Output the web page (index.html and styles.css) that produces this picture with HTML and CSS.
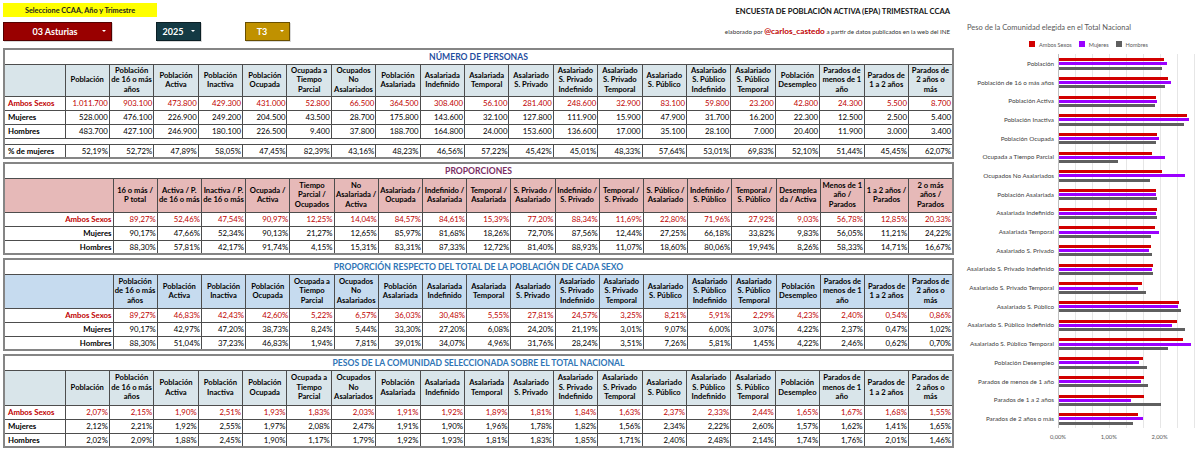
FILE: index.html
```html
<!DOCTYPE html>
<html lang="es">
<head>
<meta charset="utf-8">
<title>EPA trimestral CCAA</title>
<link rel="stylesheet" href="styles.css">
</head>
<body>
<div class="page">
  <main class="main">
    <header class="top">
      <div class="selectors">
        <div class="prompt">Seleccione CCAA, Año y Trimestre</div>
        <div class="dropdowns">
          <div class="dd dd-ccaa"><span class="dd-text">03 Asturias</span><i class="caret"></i></div>
          <div class="dd dd-year"><span class="dd-text">2025</span><i class="caret"></i></div>
          <div class="dd dd-tri"><span class="dd-text">T3</span><i class="caret"></i></div>
        </div>
      </div>
      <div class="heading">
        <div class="h-title">ENCUESTA DE POBLACIÓN ACTIVA (EPA) TRIMESTRAL CCAA</div>
        <div class="h-credit">elaborado por <b class="handle">@carlos_castedo</b> a partir de datos publicados en la web del INE</div>
      </div>
    </header>

    <table class="tbl t-blue">
      <colgroup><col class="c-lab"><col span="20"></colgroup>
      <tr class="ttl ttl-num"><td colspan="21">NÚMERO DE PERSONAS</td></tr>
      <tr class="hdr">
        <th></th><th>Población</th><th>Población<br>de 16 o más<br>años</th><th>Población<br>Activa</th><th>Población<br>Inactiva</th><th>Población<br>Ocupada</th><th>Ocupada a<br>Tiempo<br>Parcial</th><th>Ocupados<br>No<br>Asalariados</th><th>Población<br>Asalariada</th><th>Asalariada<br>Indefinido</th><th>Asalariada<br>Temporal</th><th>Asalariado<br>S. Privado</th><th>Asalariado<br>S. Privado<br>Indefinido</th><th>Asalariado<br>S. Privado<br>Temporal</th><th>Asalariado<br>S. Público</th><th>Asalariado<br>S. Público<br>Indefinido</th><th>Asalariado<br>S. Público<br>Temporal</th><th>Población<br>Desempleo</th><th>Parados de<br>menos de 1<br>año</th><th>Parados de<br>1 a 2 años</th><th>Parados de<br>2 años o<br>más</th>
      </tr>
      <tr class="amb"><td class="lab">Ambos Sexos</td><td>1.011.700</td><td>903.100</td><td>473.800</td><td>429.300</td><td>431.000</td><td>52.800</td><td>66.500</td><td>364.500</td><td>308.400</td><td>56.100</td><td>281.400</td><td>248.600</td><td>32.900</td><td>83.100</td><td>59.800</td><td>23.200</td><td>42.800</td><td>24.300</td><td>5.500</td><td>8.700</td></tr>
      <tr><td class="lab">Mujeres</td><td>528.000</td><td>476.100</td><td>226.900</td><td>249.200</td><td>204.500</td><td>43.500</td><td>28.700</td><td>175.800</td><td>143.600</td><td>32.100</td><td>127.800</td><td>111.900</td><td>15.900</td><td>47.900</td><td>31.700</td><td>16.200</td><td>22.300</td><td>12.500</td><td>2.500</td><td>5.400</td></tr>
      <tr><td class="lab">Hombres</td><td>483.700</td><td>427.100</td><td>246.900</td><td>180.100</td><td>226.500</td><td>9.400</td><td>37.800</td><td>188.700</td><td>164.800</td><td>24.000</td><td>153.600</td><td>136.600</td><td>17.000</td><td>35.100</td><td>28.100</td><td>7.000</td><td>20.400</td><td>11.900</td><td>3.000</td><td>3.400</td></tr>
      <tr class="sp"><td colspan="21"></td></tr>
      <tr><td class="lab">% de mujeres</td><td>52,19%</td><td>52,72%</td><td>47,89%</td><td>58,05%</td><td>47,45%</td><td>82,39%</td><td>43,16%</td><td>48,23%</td><td>46,56%</td><td>57,22%</td><td>45,42%</td><td>45,01%</td><td>48,33%</td><td>57,64%</td><td>53,01%</td><td>69,83%</td><td>52,10%</td><td>51,44%</td><td>45,45%</td><td>62,07%</td></tr>
    </table>

    <table class="tbl t-pink">
      <colgroup><col class="c-lab2"><col span="19"></colgroup>
      <tr class="ttl ttl-prop"><td colspan="20">PROPORCIONES</td></tr>
      <tr class="hdr">
        <th></th><th>16 o más /<br>P total</th><th>Activa / P.<br>de 16 o más</th><th>Inactiva / P.<br>de 16 o más</th><th>Ocupada /<br>Activa</th><th>Tiempo<br>Parcial /<br>Ocupados</th><th>No<br>Asalariada /<br>Activa</th><th>Asalariada /<br>Ocupada</th><th>Indefinido /<br>Asalariada</th><th>Temporal /<br>Asalariada</th><th>S. Privado /<br>Asalariado</th><th>Indefinido /<br>S. Privado</th><th>Temporal /<br>S. Privado</th><th>S. Público /<br>Asalariado</th><th>Indefinido /<br>S. Público</th><th>Temporal /<br>S. Público</th><th>Desemplea<br>da / Activa</th><th>Menos de 1<br>año /<br>Parados</th><th>1 a 2 años /<br>Parados</th><th>2 o más<br>años /<br>Parados</th>
      </tr>
      <tr class="amb"><td class="lab lab-r">Ambos Sexos</td><td>89,27%</td><td>52,46%</td><td>47,54%</td><td>90,97%</td><td>12,25%</td><td>14,04%</td><td>84,57%</td><td>84,61%</td><td>15,39%</td><td>77,20%</td><td>88,34%</td><td>11,69%</td><td>22,80%</td><td>71,96%</td><td>27,92%</td><td>9,03%</td><td>56,78%</td><td>12,85%</td><td>20,33%</td></tr>
      <tr><td class="lab lab-r">Mujeres</td><td>90,17%</td><td>47,66%</td><td>52,34%</td><td>90,13%</td><td>21,27%</td><td>12,65%</td><td>85,97%</td><td>81,68%</td><td>18,26%</td><td>72,70%</td><td>87,56%</td><td>12,44%</td><td>27,25%</td><td>66,18%</td><td>33,82%</td><td>9,83%</td><td>56,05%</td><td>11,21%</td><td>24,22%</td></tr>
      <tr><td class="lab lab-r">Hombres</td><td>88,30%</td><td>57,81%</td><td>42,17%</td><td>91,74%</td><td>4,15%</td><td>15,31%</td><td>83,31%</td><td>87,33%</td><td>12,72%</td><td>81,40%</td><td>88,93%</td><td>11,07%</td><td>18,60%</td><td>80,06%</td><td>19,94%</td><td>8,26%</td><td>58,33%</td><td>14,71%</td><td>16,67%</td></tr>
    </table>

    <table class="tbl t-sky">
      <colgroup><col class="c-lab2"><col span="19"></colgroup>
      <tr class="ttl ttl-blue"><td colspan="20">PROPORCIÓN RESPECTO DEL TOTAL DE LA POBLACIÓN DE CADA SEXO</td></tr>
      <tr class="hdr">
        <th></th><th>Población<br>de 16 o más<br>años</th><th>Población<br>Activa</th><th>Población<br>Inactiva</th><th>Población<br>Ocupada</th><th>Ocupada a<br>Tiempo<br>Parcial</th><th>Ocupados<br>No<br>Asalariados</th><th>Población<br>Asalariada</th><th>Asalariada<br>Indefinido</th><th>Asalariada<br>Temporal</th><th>Asalariado<br>S. Privado</th><th>Asalariado<br>S. Privado<br>Indefinido</th><th>Asalariado<br>S. Privado<br>Temporal</th><th>Asalariado<br>S. Público</th><th>Asalariado<br>S. Público<br>Indefinido</th><th>Asalariado<br>S. Público<br>Temporal</th><th>Población<br>Desempleo</th><th>Parados de<br>menos de 1<br>año</th><th>Parados de<br>1 a 2 años</th><th>Parados de<br>2 años o<br>más</th>
      </tr>
      <tr class="amb"><td class="lab lab-r">Ambos Sexos</td><td>89,27%</td><td>46,83%</td><td>42,43%</td><td>42,60%</td><td>5,22%</td><td>6,57%</td><td>36,03%</td><td>30,48%</td><td>5,55%</td><td>27,81%</td><td>24,57%</td><td>3,25%</td><td>8,21%</td><td>5,91%</td><td>2,29%</td><td>4,23%</td><td>2,40%</td><td>0,54%</td><td>0,86%</td></tr>
      <tr><td class="lab lab-r">Mujeres</td><td>90,17%</td><td>42,97%</td><td>47,20%</td><td>38,73%</td><td>8,24%</td><td>5,44%</td><td>33,30%</td><td>27,20%</td><td>6,08%</td><td>24,20%</td><td>21,19%</td><td>3,01%</td><td>9,07%</td><td>6,00%</td><td>3,07%</td><td>4,22%</td><td>2,37%</td><td>0,47%</td><td>1,02%</td></tr>
      <tr><td class="lab lab-r">Hombres</td><td>88,30%</td><td>51,04%</td><td>37,23%</td><td>46,83%</td><td>1,94%</td><td>7,81%</td><td>39,01%</td><td>34,07%</td><td>4,96%</td><td>31,76%</td><td>28,24%</td><td>3,51%</td><td>7,26%</td><td>5,81%</td><td>1,45%</td><td>4,22%</td><td>2,46%</td><td>0,62%</td><td>0,70%</td></tr>
    </table>

    <table class="tbl t-blue t-peso">
      <colgroup><col class="c-lab"><col span="20"></colgroup>
      <tr class="ttl ttl-blue"><td colspan="21">PESOS DE LA COMUNIDAD SELECCIONADA SOBRE EL TOTAL NACIONAL</td></tr>
      <tr class="hdr">
        <th></th><th>Población</th><th>Población<br>de 16 o más<br>años</th><th>Población<br>Activa</th><th>Población<br>Inactiva</th><th>Población<br>Ocupada</th><th>Ocupada a<br>Tiempo<br>Parcial</th><th>Ocupados<br>No<br>Asalariados</th><th>Población<br>Asalariada</th><th>Asalariada<br>Indefinido</th><th>Asalariada<br>Temporal</th><th>Asalariado<br>S. Privado</th><th>Asalariado<br>S. Privado<br>Indefinido</th><th>Asalariado<br>S. Privado<br>Temporal</th><th>Asalariado<br>S. Público</th><th>Asalariado<br>S. Público<br>Indefinido</th><th>Asalariado<br>S. Público<br>Temporal</th><th>Población<br>Desempleo</th><th>Parados de<br>menos de 1<br>año</th><th>Parados de<br>1 a 2 años</th><th>Parados de<br>2 años o<br>más</th>
      </tr>
      <tr class="amb"><td class="lab">Ambos Sexos</td><td>2,07%</td><td>2,15%</td><td>1,90%</td><td>2,51%</td><td>1,93%</td><td>1,83%</td><td>2,03%</td><td>1,91%</td><td>1,92%</td><td>1,89%</td><td>1,81%</td><td>1,84%</td><td>1,63%</td><td>2,37%</td><td>2,33%</td><td>2,44%</td><td>1,65%</td><td>1,67%</td><td>1,68%</td><td>1,55%</td></tr>
      <tr><td class="lab">Mujeres</td><td>2,12%</td><td>2,21%</td><td>1,92%</td><td>2,55%</td><td>1,97%</td><td>2,08%</td><td>2,47%</td><td>1,91%</td><td>1,90%</td><td>1,96%</td><td>1,78%</td><td>1,82%</td><td>1,56%</td><td>2,34%</td><td>2,22%</td><td>2,60%</td><td>1,57%</td><td>1,62%</td><td>1,41%</td><td>1,65%</td></tr>
      <tr><td class="lab">Hombres</td><td>2,02%</td><td>2,09%</td><td>1,88%</td><td>2,45%</td><td>1,90%</td><td>1,17%</td><td>1,79%</td><td>1,92%</td><td>1,93%</td><td>1,81%</td><td>1,83%</td><td>1,85%</td><td>1,71%</td><td>2,40%</td><td>2,48%</td><td>2,14%</td><td>1,74%</td><td>1,76%</td><td>2,01%</td><td>1,46%</td></tr>
    </table>
  </main>

  <aside class="chart">
    <div class="chart-title">Peso de la Comunidad elegida en el Total Nacional</div>
    <div class="legend">
      <span class="lg"><i class="sw sw-a"></i>Ambos Sexos</span>
      <span class="lg"><i class="sw sw-m"></i>Mujeres</span>
      <span class="lg"><i class="sw sw-h"></i>Hombres</span>
    </div>
    <div class="plot">
      <div class="cats">
        <div class="cat">Población</div>
        <div class="cat">Población de 16 o más años</div>
        <div class="cat">Población Activa</div>
        <div class="cat">Población Inactiva</div>
        <div class="cat">Población Ocupada</div>
        <div class="cat">Ocupada a Tiempo Parcial</div>
        <div class="cat">Ocupados No Asalariados</div>
        <div class="cat">Población Asalariada</div>
        <div class="cat">Asalariada Indefinido</div>
        <div class="cat">Asalariada Temporal</div>
        <div class="cat">Asalariado S. Privado</div>
        <div class="cat">Asalariado S. Privado Indefinido</div>
        <div class="cat">Asalariado S. Privado Temporal</div>
        <div class="cat">Asalariado S. Público</div>
        <div class="cat">Asalariado S. Público Indefinido</div>
        <div class="cat">Asalariado S. Público Temporal</div>
        <div class="cat">Población Desempleo</div>
        <div class="cat">Parados de menos de 1 año</div>
        <div class="cat">Parados de 1 a 2 años</div>
        <div class="cat">Parados de 2 años o más</div>
      </div>
      <div class="barcol">
        <div class="grp"><i class="bar a" style="width:105.2px"></i><i class="bar m" style="width:107.7px"></i><i class="bar h" style="width:102.6px"></i></div>
        <div class="grp"><i class="bar a" style="width:109.2px"></i><i class="bar m" style="width:112.3px"></i><i class="bar h" style="width:106.2px"></i></div>
        <div class="grp"><i class="bar a" style="width:96.5px"></i><i class="bar m" style="width:97.5px"></i><i class="bar h" style="width:95.5px"></i></div>
        <div class="grp"><i class="bar a" style="width:127.5px"></i><i class="bar m" style="width:129.5px"></i><i class="bar h" style="width:124.5px"></i></div>
        <div class="grp"><i class="bar a" style="width:98.0px"></i><i class="bar m" style="width:100.1px"></i><i class="bar h" style="width:96.5px"></i></div>
        <div class="grp"><i class="bar a" style="width:93.0px"></i><i class="bar m" style="width:105.7px"></i><i class="bar h" style="width:59.4px"></i></div>
        <div class="grp"><i class="bar a" style="width:103.1px"></i><i class="bar m" style="width:125.5px"></i><i class="bar h" style="width:90.9px"></i></div>
        <div class="grp"><i class="bar a" style="width:97.0px"></i><i class="bar m" style="width:97.0px"></i><i class="bar h" style="width:97.5px"></i></div>
        <div class="grp"><i class="bar a" style="width:97.5px"></i><i class="bar m" style="width:96.5px"></i><i class="bar h" style="width:98.0px"></i></div>
        <div class="grp"><i class="bar a" style="width:96.0px"></i><i class="bar m" style="width:99.6px"></i><i class="bar h" style="width:91.9px"></i></div>
        <div class="grp"><i class="bar a" style="width:91.9px"></i><i class="bar m" style="width:90.4px"></i><i class="bar h" style="width:93.0px"></i></div>
        <div class="grp"><i class="bar a" style="width:93.5px"></i><i class="bar m" style="width:92.5px"></i><i class="bar h" style="width:94.0px"></i></div>
        <div class="grp"><i class="bar a" style="width:82.8px"></i><i class="bar m" style="width:79.2px"></i><i class="bar h" style="width:86.9px"></i></div>
        <div class="grp"><i class="bar a" style="width:120.4px"></i><i class="bar m" style="width:118.9px"></i><i class="bar h" style="width:121.9px"></i></div>
        <div class="grp"><i class="bar a" style="width:118.4px"></i><i class="bar m" style="width:112.8px"></i><i class="bar h" style="width:126.0px"></i></div>
        <div class="grp"><i class="bar a" style="width:124.0px"></i><i class="bar m" style="width:132.1px"></i><i class="bar h" style="width:108.7px"></i></div>
        <div class="grp"><i class="bar a" style="width:83.8px"></i><i class="bar m" style="width:79.8px"></i><i class="bar h" style="width:88.4px"></i></div>
        <div class="grp"><i class="bar a" style="width:84.8px"></i><i class="bar m" style="width:82.3px"></i><i class="bar h" style="width:89.4px"></i></div>
        <div class="grp"><i class="bar a" style="width:85.3px"></i><i class="bar m" style="width:71.6px"></i><i class="bar h" style="width:102.1px"></i></div>
        <div class="grp"><i class="bar a" style="width:78.7px"></i><i class="bar m" style="width:83.8px"></i><i class="bar h" style="width:74.2px"></i></div>
      </div>
    </div>
    <div class="axis"><span>0,00%</span><span>1,00%</span><span>2,00%</span></div>
  </aside>
</div>
</body>
</html>
```
FILE: styles.css
```css
* { box-sizing: border-box; }

html, body {
  margin: 0;
  padding: 0;
  background: #ffffff;
}

body {
  width: 1200px;
  height: 454px;
  overflow: hidden;
  font-family: Lato, "Liberation Sans", sans-serif;
  color: #000;
}

.page {
  display: flex;
  align-items: flex-start;
}

.main {
  width: 958px;
  padding: 3px 0 0 3px;
}

/* ---------- header ---------- */
.top {
  display: flex;
  justify-content: space-between;
  height: 45px;
}

.selectors {
  display: flex;
  flex-direction: column;
  gap: 5px;
}

.prompt {
  width: 154px;
  height: 14px;
  background: #ffff00;
  font-size: 7.3px;
  font-weight: 700;
  color: #222;
  display: flex;
  align-items: center;
  justify-content: center;
}

.dropdowns {
  display: flex;
  gap: 44px;
}

.dd {
  height: 19px;
  display: flex;
  align-items: center;
  color: #fff;
  font-weight: 700;
  font-size: 9px;
  border: 1px solid rgba(0, 0, 0, 0.45);
  box-shadow: 1px 1px 0 rgba(0, 0, 0, 0.15);
}

.dd-text {
  flex: 1;
  text-align: center;
}

.caret {
  width: 0;
  height: 0;
  border-left: 2px solid transparent;
  border-right: 2px solid transparent;
  border-top: 2px solid #fff;
  margin: 0 5px 2px 2px;
}

.dd-ccaa { width: 109px; background: #990000; }
.dd-ccaa .dd-text { padding-left: 6px; }
.dd-year { width: 45px; background: #143a44; }
.dd-tri { width: 45px; background: #c09100; }

.heading {
  padding-right: 8px;
  display: flex;
  flex-direction: column;
  align-items: flex-end;
}

.h-title {
  font-size: 7.6px;
  font-weight: 700;
  line-height: 16px;
  color: #111;
}

.h-credit {
  margin-top: 6px;
  font-size: 6.2px;
  line-height: 12px;
  color: #333;
}

.handle {
  font-size: 8.2px;
  color: #c00000;
}

/* ---------- tables ---------- */
.tbl {
  width: 951px;
  table-layout: fixed;
  border-collapse: collapse;
  border: 2px solid #858585;
  margin-bottom: 3px;
}

.c-lab { width: 61px; }
.c-lab2 { width: 109px; }

.tbl td,
.tbl th {
  border: 1px solid #4d4d4d;
  padding: 0 1px;
  white-space: nowrap;
}

.tbl td {
  height: 14px;
  font-size: 7.8px;
  text-align: right;
  line-height: 12px;
}

.tbl th {
  font-size: 7.6px;
  font-weight: 700;
  line-height: 9.5px;
  text-align: center;
  vertical-align: middle;
}

.tbl .ttl td {
  height: 15px;
  border-left: none;
  border-right: none;
  font-size: 8.6px;
  font-weight: 700;
  text-align: center;
  background: #fff;
}

.ttl-num td { color: #1f4ea0; }
.ttl-prop td { color: #7b2d63; }
.ttl-blue td { color: #2f75b6; }

.t-blue .hdr th { background: #d9e5ea; height: 32px; }
.t-peso .hdr th { height: 35px; }
.t-pink .hdr th { background: #e6b9b8; height: 34px; }
.t-sky .hdr th { background: #c6dbef; height: 34px; }

.tbl td.lab {
  font-weight: 700;
  text-align: left;
  padding-left: 3px;
}

.tbl td.lab-r {
  text-align: right;
  padding-right: 1px;
}

.tbl .amb td { color: #c00000; }

.tbl .sp td {
  height: 6px;
  border-left: none;
  border-right: none;
}

/* ---------- chart ---------- */
.chart {
  width: 242px;
  padding-top: 23px;
}

.chart-title {
  padding-left: 9px;
  font-size: 7.5px;
  line-height: 10px;
  color: #595959;
}

.legend {
  margin-top: 6px;
  height: 10px;
  padding-left: 71px;
  display: flex;
  gap: 7px;
  align-items: center;
  font-size: 5.6px;
  color: #595959;
}

.lg {
  display: flex;
  align-items: center;
  gap: 4px;
}

.sw {
  width: 6px;
  height: 6px;
  display: block;
}

.sw-a, .bar.a { background: #d20000; }
.sw-m, .bar.m { background: #9b00ff; }
.sw-h, .bar.h { background: #5f5f5f; }

.plot {
  margin-top: 5px;
  display: flex;
}

.cats {
  width: 100px;
  padding-right: 4px;
  display: flex;
  flex-direction: column;
}

.cat {
  height: 18.7px;
  display: flex;
  align-items: center;
  justify-content: flex-end;
  font-size: 6.3px;
  color: #404040;
  white-space: nowrap;
}

.barcol {
  width: 138px;
  border-left: 1px solid #bfbfbf;
  display: flex;
  flex-direction: column;
  background-image: repeating-linear-gradient(to right, transparent 0 16px, #e6e6e6 16px 17px);
}

.grp {
  height: 18.7px;
  display: flex;
  flex-direction: column;
  justify-content: center;
  gap: 1.2px;
  padding-top: 1px;
}

.bar {
  display: block;
  height: 3px;
}

.axis {
  margin-top: 4px;
  margin-left: 74.6px;
  display: flex;
  font-size: 5.8px;
  line-height: 10px;
  color: #595959;
}

.axis span {
  width: 50.8px;
  text-align: center;
}
```
